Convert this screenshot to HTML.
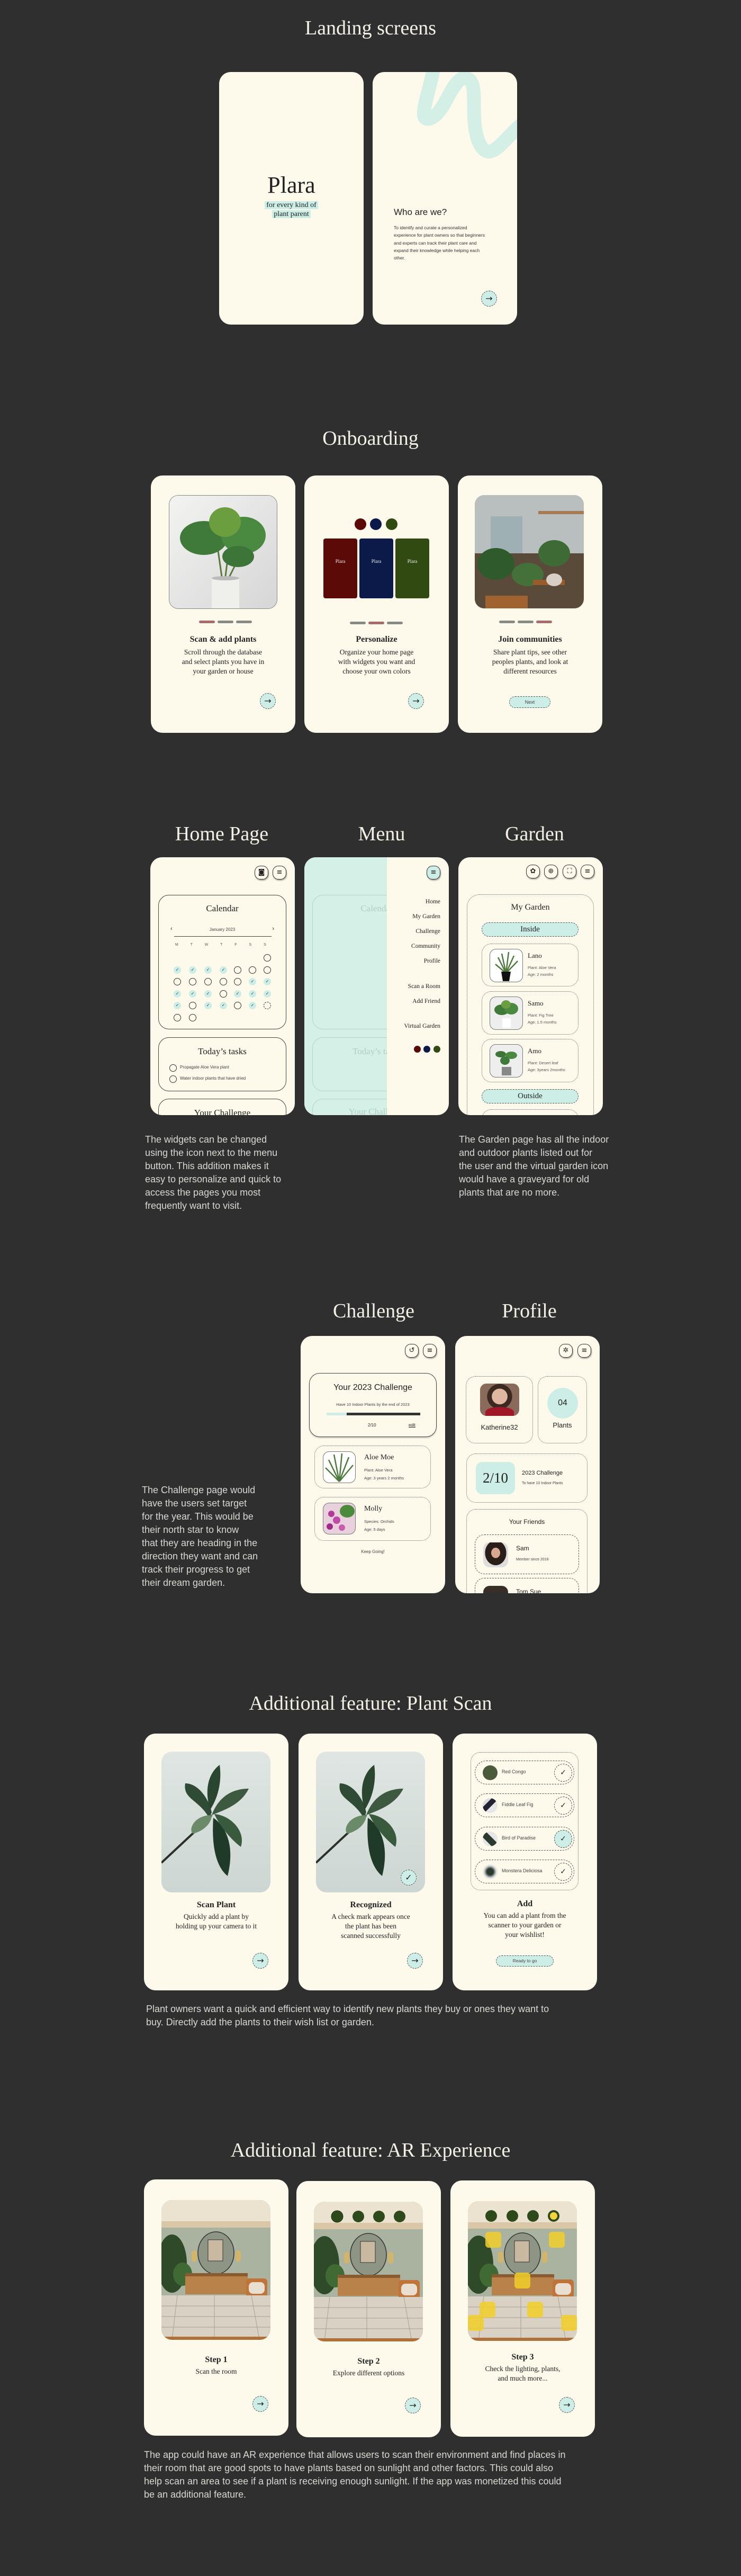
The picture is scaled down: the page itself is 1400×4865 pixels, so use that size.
<!DOCTYPE html>
<html><head><meta charset="utf-8">
<style>
*{box-sizing:border-box;margin:0;padding:0}
body{width:1400px;height:4865px;background:#2f2f2f;position:relative;overflow:hidden;font-family:"Liberation Serif",serif;color:#222}
.a{position:absolute}
.h{position:absolute;left:0;width:1400px;text-align:center;color:#f3f0e6;font-family:"Liberation Serif",serif;font-size:38px;line-height:44px}
.ht{position:absolute;text-align:center;color:#f3f0e6;font-size:38px;line-height:44px;width:300px}
.p{position:absolute;background:#fdf9eb;border-radius:22px;overflow:hidden;width:273px}
.desc{position:absolute;color:#d8d8d2;font-family:"Liberation Sans",sans-serif;font-size:18px;line-height:25px}
.arr{position:absolute;width:30px;height:30px;border-radius:50%;background:#cdeee6;border:1px dashed #555;text-align:center;font:16px/27px "DejaVu Sans",sans-serif;color:#222}
.c{position:absolute;left:0;width:100%;text-align:center}
.ti{font-size:16px;font-weight:bold;line-height:20px}
.ds{font-size:13.5px;line-height:18px}
.ib{position:absolute;width:26px;height:26px;border:1.2px solid #333;border-radius:11px;background:#fdf9eb;box-shadow:1px 2px 2px rgba(0,0,0,.35);text-align:center;font:13px/23px "DejaVu Sans",sans-serif}
.card{position:absolute;border:1px solid #444;border-radius:20px}
.dc{position:absolute;border:1px dotted #666;border-radius:18px}
.dash{position:absolute;border:1px dashed #555;border-radius:16px}
.cir{position:absolute;width:14px;height:14px;border-radius:50%;border:1px solid #333}
.ck{position:absolute;width:14px;height:14px;border-radius:50%;background:#cdeee6;font:8px/14px "DejaVu Sans",sans-serif;text-align:center;color:#234}
.sm{font-family:"Liberation Sans",sans-serif}
</style></head><body>

<!-- LANDING -->
<div class="h" style="top:31px">Landing screens</div>
<div class="p" style="left:414px;top:136px;height:477px">
  <div class="c" style="top:188px;font-size:44px;line-height:52px">Plara</div>
  <div class="c" style="top:243px;font-size:14px;line-height:17px"><span style="background:#cdeee6;padding:0 3px">for every kind of</span><br><span style="background:#cdeee6;padding:0 3px">plant parent</span></div>
</div>
<div class="p" style="left:704px;top:136px;height:477px">
  <svg class="a" style="left:0;top:0" width="273" height="200"><path d="M118,-20 C108,40 82,95 108,88 C138,80 150,5 178,12 C205,20 178,100 206,142 C228,170 250,120 295,88" fill="none" stroke="#d3efe6" stroke-width="26" stroke-linecap="round"/></svg>
  <div class="a sm" style="left:40px;top:254px;font-size:17px;line-height:22px">Who are we?</div>
  <div class="a sm" style="left:40px;top:287px;width:175px;font-size:8.5px;line-height:14.3px;color:#333">To identify and curate a personalized experience for plant owners so that beginners and experts can track their plant care and expand their knowledge while helping each other.</div>
  <div class="arr" style="left:205px;top:413px">→</div>
</div>

<!-- ONBOARDING -->
<div class="h" style="top:806px">Onboarding</div>
<div class="p" style="left:285px;top:898px;height:486px">
  <svg class="a" style="left:34px;top:37px;border-radius:18px;border:1px solid #888" width="205" height="215">
    <defs><linearGradient id="g1" x1="0" y1="0" x2="1" y2="1"><stop offset="0" stop-color="#f3f3f2"/><stop offset="1" stop-color="#d6d6d6"/></linearGradient></defs>
    <rect width="205" height="215" fill="url(#g1)"/>
    <path d="M100,160 L90,90 M105,160 L115,80 M110,160 L140,100" stroke="#5a7a3a" stroke-width="3"/>
    <ellipse cx="65" cy="80" rx="45" ry="32" fill="#3f7a3a"/><ellipse cx="140" cy="75" rx="42" ry="35" fill="#4a8a40"/><ellipse cx="105" cy="50" rx="30" ry="28" fill="#6a9e3e"/><ellipse cx="130" cy="115" rx="30" ry="20" fill="#3d7538"/>
    <rect x="80" y="155" width="52" height="60" fill="#efefec"/><ellipse cx="106" cy="156" rx="26" ry="4" fill="#bbb"/>
  </svg>
  <div class="a" style="left:91px;top:274px;width:30px;height:5px;border-radius:3px;background:#a86a6a"></div>
  <div class="a" style="left:126px;top:274px;width:30px;height:5px;border-radius:3px;background:#8a8a84"></div>
  <div class="a" style="left:161px;top:274px;width:30px;height:5px;border-radius:3px;background:#8a8a84"></div>
  <div class="c ti" style="top:300px">Scan &amp; add plants</div>
  <div class="c ds" style="top:325px">Scroll through the database<br>and select plants you have in<br>your garden or house</div>
  <div class="arr" style="left:206px;top:411px">→</div>
</div>
<div class="p" style="left:575px;top:898px;height:486px">
  <div class="a" style="left:95px;top:81px;width:22px;height:22px;border-radius:50%;background:#5c0a08"></div>
  <div class="a" style="left:124px;top:81px;width:22px;height:22px;border-radius:50%;background:#0c1a4a"></div>
  <div class="a" style="left:154px;top:81px;width:22px;height:22px;border-radius:50%;background:#314a12"></div>
  <div class="a" style="left:36px;top:119px;width:64px;height:113px;border-radius:4px;background:#5c0a08;color:#eee;text-align:center;font-size:9px;padding-top:38px">Plara</div>
  <div class="a" style="left:104px;top:119px;width:64px;height:113px;border-radius:4px;background:#0c1a4a;color:#eee;text-align:center;font-size:9px;padding-top:38px">Plara</div>
  <div class="a" style="left:172px;top:119px;width:64px;height:113px;border-radius:4px;background:#314a12;color:#eee;text-align:center;font-size:9px;padding-top:38px">Plara</div>
  <div class="a" style="left:86px;top:276px;width:30px;height:5px;border-radius:3px;background:#8a8a84"></div>
  <div class="a" style="left:121px;top:276px;width:30px;height:5px;border-radius:3px;background:#a86a6a"></div>
  <div class="a" style="left:156px;top:276px;width:30px;height:5px;border-radius:3px;background:#8a8a84"></div>
  <div class="c ti" style="top:300px">Personalize</div>
  <div class="c ds" style="top:325px">Organize your home page<br>with widgets you want and<br>choose your own colors</div>
  <div class="arr" style="left:196px;top:411px">→</div>
</div>
<div class="p" style="left:865px;top:898px;height:486px">
  <svg class="a" style="left:32px;top:37px;border-radius:18px" width="206" height="214">
    <rect width="206" height="214" fill="#8a8c84"/>
    <rect x="0" y="0" width="206" height="110" fill="#b9bfbf"/><rect x="30" y="40" width="60" height="70" fill="#9fb0b5"/><rect x="120" y="30" width="86" height="6" fill="#a87a50"/>
    <rect x="0" y="110" width="206" height="104" fill="#5a4a3a"/>
    <ellipse cx="40" cy="130" rx="35" ry="30" fill="#2f5a2c"/><ellipse cx="150" cy="110" rx="30" ry="25" fill="#3d6a35"/><ellipse cx="100" cy="150" rx="30" ry="22" fill="#44703a"/>
    <rect x="110" y="160" width="60" height="10" fill="#9a5a2a"/><rect x="20" y="190" width="80" height="24" fill="#a0622e"/><ellipse cx="150" cy="160" rx="15" ry="12" fill="#d8d0c6"/>
  </svg>
  <div class="a" style="left:78px;top:274px;width:30px;height:5px;border-radius:3px;background:#8a8a84"></div>
  <div class="a" style="left:113px;top:274px;width:30px;height:5px;border-radius:3px;background:#8a8a84"></div>
  <div class="a" style="left:148px;top:274px;width:30px;height:5px;border-radius:3px;background:#a86a6a"></div>
  <div class="c ti" style="top:300px">Join communities</div>
  <div class="c ds" style="top:325px">Share plant tips, see other<br>peoples plants, and look at<br>different resources</div>
  <div class="a sm" style="left:97px;top:417px;width:78px;height:22px;border-radius:11px;background:#cdeee6;border:1px dashed #555;text-align:center;font-size:9px;line-height:20px;color:#444">Next</div>
</div>

<!-- HOME / MENU / GARDEN -->
<div class="ht" style="left:269px;top:1553px">Home Page</div>
<div class="ht" style="left:571px;top:1553px">Menu</div>
<div class="ht" style="left:860px;top:1553px">Garden</div>

<div class="p" style="left:284px;top:1619px;height:487px">
  <div class="ib" style="left:197px;top:16px">◙</div>
  <div class="ib" style="left:231px;top:16px">≡</div>
  <div class="card" style="left:15px;top:71px;width:242px;height:254px">
    <div class="c" style="top:15px;font-size:17px">Calendar</div>
    <div class="a sm" style="left:22px;top:57px;font-size:11px">‹</div>
    <div class="c sm" style="top:60px;font-size:8px;color:#444">January 2023</div>
    <div class="a sm" style="right:22px;top:57px;font-size:11px">›</div>
    <div class="a" style="left:29px;top:77px;width:184px;height:1px;background:#444"></div>
  </div>
  <div class="a sm" style="left:47px;top:162px;width:190px;font-size:7px;color:#555;word-spacing:21px">M T W T F S S</div>
  <!-- row0 -->
  <div class="cir" style="left:214px;top:183px"></div>
  <!-- row1 -->
  <div class="ck" style="left:44px;top:206px">✓</div><div class="ck" style="left:73px;top:206px">✓</div><div class="ck" style="left:102px;top:206px">✓</div><div class="ck" style="left:131px;top:206px">✓</div><div class="cir" style="left:158px;top:206px"></div><div class="cir" style="left:186px;top:206px"></div><div class="cir" style="left:214px;top:206px"></div>
  <!-- row2 -->
  <div class="cir" style="left:44px;top:228px"></div><div class="cir" style="left:73px;top:228px"></div><div class="cir" style="left:102px;top:228px"></div><div class="cir" style="left:131px;top:228px"></div><div class="cir" style="left:158px;top:228px"></div><div class="ck" style="left:186px;top:228px">✓</div><div class="ck" style="left:214px;top:228px">✓</div>
  <!-- row3 -->
  <div class="ck" style="left:44px;top:251px">✓</div><div class="ck" style="left:73px;top:251px">✓</div><div class="ck" style="left:102px;top:251px">✓</div><div class="cir" style="left:131px;top:251px"></div><div class="ck" style="left:158px;top:251px">✓</div><div class="ck" style="left:186px;top:251px">✓</div><div class="ck" style="left:214px;top:251px">✓</div>
  <!-- row4 -->
  <div class="ck" style="left:44px;top:273px">✓</div><div class="cir" style="left:73px;top:273px"></div><div class="ck" style="left:102px;top:273px">✓</div><div class="ck" style="left:131px;top:273px">✓</div><div class="cir" style="left:158px;top:273px"></div><div class="ck" style="left:186px;top:273px">✓</div><div class="cir" style="left:214px;top:273px;border-style:dashed"></div>
  <!-- row5 -->
  <div class="cir" style="left:44px;top:296px"></div><div class="cir" style="left:73px;top:296px"></div>
  <div class="card" style="left:15px;top:340px;width:242px;height:102px">
    <div class="c" style="top:16px;font-size:17px">Today’s tasks</div>
    <div class="cir" style="left:20px;top:50px"></div><div class="a sm" style="left:40px;top:51px;font-size:8px;color:#444">Propagate Aloe Vera plant</div>
    <div class="cir" style="left:20px;top:71px"></div><div class="a sm" style="left:40px;top:72px;font-size:8px;color:#444">Water indoor plants that have dried</div>
  </div>
  <div class="card" style="left:15px;top:456px;width:242px;height:102px">
    <div class="c" style="top:16px;font-size:17px">Your Challenge</div>
  </div>
</div>

<div class="p" style="left:575px;top:1619px;height:487px">
  <div class="a" style="left:0;top:0;width:156px;height:487px;background:#d5f1e7;overflow:hidden">
    <div style="opacity:.18">
    <div class="card" style="left:15px;top:71px;width:242px;height:254px"><div class="a" style="left:0;width:242px;text-align:center;top:15px;font-size:17px">Calendar</div></div>
    <div class="card" style="left:15px;top:340px;width:242px;height:102px"><div class="a" style="left:0;width:242px;text-align:center;top:16px;font-size:17px">Today’s tasks</div></div>
    <div class="card" style="left:15px;top:456px;width:242px;height:102px"><div class="a" style="left:0;width:242px;text-align:center;top:14px;font-size:17px">Your Challenge</div></div>
    </div>
  </div>
  <div class="ib" style="left:231px;top:16px;background:#cdeee6">≡</div>
  <div class="a" style="right:16px;top:70px;text-align:right;font-size:11.5px;line-height:28px">Home<br>My Garden<br>Challenge<br>Community<br>Profile</div>
  <div class="a" style="right:16px;top:230px;text-align:right;font-size:11.5px;line-height:28px">Scan a Room<br>Add Friend</div>
  <div class="a" style="right:16px;top:305px;text-align:right;font-size:11.5px;line-height:28px">Virtual Garden</div>
  <div class="a" style="left:207px;top:356px;width:13px;height:13px;border-radius:50%;background:#5c0a08"></div>
  <div class="a" style="left:225px;top:356px;width:13px;height:13px;border-radius:50%;background:#0c1a4a"></div>
  <div class="a" style="left:244px;top:356px;width:13px;height:13px;border-radius:50%;background:#314a12"></div>
</div>

<div class="p" style="left:866px;top:1619px;height:487px">
  <div class="ib" style="left:128px;top:14px">✿</div>
  <div class="ib" style="left:162px;top:14px">⊕</div>
  <div class="ib" style="left:197px;top:14px">⛶</div>
  <div class="ib" style="left:231px;top:14px">≡</div>
  <div class="dc" style="left:16px;top:70px;width:240px;height:440px;border-radius:24px">
    <div class="c" style="top:15px;font-size:16px">My Garden</div>
  </div>
  <div class="dash" style="left:44px;top:123px;width:183px;height:27px;background:#cdeee6;text-align:center;font-size:15px;line-height:25px">Inside</div>
  <div class="dc" style="left:44px;top:163px;width:183px;height:81px">
    <div class="a" style="left:14px;top:9px;width:63px;height:63px;border:1px solid #777;border-radius:12px;background:#fff"><svg width="61" height="61"><path d="M30,45 L15,15 M30,45 L22,8 M30,45 L35,5 M30,45 L45,12 M30,45 L52,22 M30,45 L10,28" stroke="#4c7a3c" stroke-width="2.5"/><path d="M21,42 L39,42 L36,60 L24,60Z" fill="#111"/></svg></div>
    <div class="a" style="left:86px;top:14px;font-size:13px">Lano</div>
    <div class="a sm" style="left:86px;top:38px;font-size:7.5px;line-height:13px;color:#555">Plant: Aloe Vera<br>Age: 2 months</div>
  </div>
  <div class="dc" style="left:44px;top:253px;width:183px;height:82px">
    <div class="a" style="left:14px;top:9px;width:63px;height:63px;border:1px solid #777;border-radius:12px;background:#eee"><svg width="61" height="61"><ellipse cx="22" cy="24" rx="14" ry="10" fill="#3f7a3a"/><ellipse cx="40" cy="22" rx="13" ry="11" fill="#4a8a40"/><ellipse cx="30" cy="14" rx="9" ry="8" fill="#6a9e3e"/><rect x="23" y="40" width="16" height="18" fill="#fff"/></svg></div>
    <div class="a" style="left:86px;top:14px;font-size:13px">Samo</div>
    <div class="a sm" style="left:86px;top:38px;font-size:7.5px;line-height:13px;color:#555">Plant: Fig Tree<br>Age: 1.5 months</div>
  </div>
  <div class="dc" style="left:44px;top:343px;width:183px;height:82px">
    <div class="a" style="left:14px;top:9px;width:63px;height:63px;border:1px solid #777;border-radius:12px;background:#eee"><svg width="61" height="61"><ellipse cx="20" cy="18" rx="10" ry="6" fill="#3d7538"/><ellipse cx="40" cy="20" rx="11" ry="7" fill="#4a8a40"/><ellipse cx="28" cy="30" rx="9" ry="8" fill="#3f7a3a"/><rect x="22" y="42" width="18" height="16" fill="#888"/></svg></div>
    <div class="a" style="left:86px;top:14px;font-size:13px">Amo</div>
    <div class="a sm" style="left:86px;top:38px;font-size:7.5px;line-height:13px;color:#555">Plant: Desert leaf<br>Age: 3years 2months</div>
  </div>
  <div class="dash" style="left:44px;top:438px;width:183px;height:27px;background:#cdeee6;text-align:center;font-size:15px;line-height:25px">Outside</div>
  <div class="dc" style="left:44px;top:476px;width:183px;height:80px"></div>
</div>

<div class="desc" style="left:274px;top:2140px">The widgets can be changed<br>using the icon next to the menu<br>button. This addition makes it<br>easy to personalize and quick to<br>access the pages you most<br>frequently want to visit.</div>
<div class="desc" style="left:867px;top:2140px">The Garden page has all the indoor<br>and outdoor plants listed out for<br>the user and the virtual garden icon<br>would have a graveyard for old<br>plants that are no more.</div>

<!-- CHALLENGE / PROFILE -->
<div class="ht" style="left:556px;top:2454px">Challenge</div>
<div class="ht" style="left:850px;top:2454px">Profile</div>
<div class="desc" style="left:268px;top:2802px">The Challenge page would<br>have the users set target<br>for the year. This would be<br>their north star to know<br>that they are heading in the<br>direction they want and can<br>track their progress to get<br>their dream garden.</div>

<div class="p" style="left:568px;top:2523px;height:486px">
  <div class="ib" style="left:197px;top:15px">↺</div>
  <div class="ib" style="left:231px;top:15px">≡</div>
  <div class="card" style="left:16px;top:70px;width:241px;height:121px;box-shadow:0 2px 2px rgba(0,0,0,.2)">
    <div class="c sm" style="top:18px;font-size:16px">Your 2023 Challenge</div>
    <div class="c sm" style="top:54px;font-size:7.5px;color:#444">Have 10 Indoor Plants by the end of 2023</div>
    <div class="a" style="left:32px;top:74px;width:177px;height:5px;background:#333"></div>
    <div class="a" style="left:32px;top:74px;width:38px;height:5px;background:#cdeee6"></div>
    <div class="a sm" style="left:110px;top:93px;font-size:8px">2/10</div>
    <div class="a sm" style="left:187px;top:93px;font-size:8px;text-decoration:underline">edit</div>
  </div>
  <div class="dc" style="left:26px;top:207px;width:220px;height:81px">
    <div class="a" style="left:15px;top:10px;width:62px;height:60px;border:1px solid #777;border-radius:12px;background:#fff"><svg width="60" height="58"><path d="M30,56 L10,15 M30,56 L20,5 M30,56 L35,3 M30,56 L48,10 M30,56 L56,25 M30,56 L4,30" stroke="#4c7a3c" stroke-width="2.5"/></svg></div>
    <div class="a" style="left:93px;top:14px;font-size:14px">Aloe Moe</div>
    <div class="a sm" style="left:93px;top:38px;font-size:7.5px;line-height:15px;color:#444">Plant: Aloe Vera<br>Age: 3 years 2 months</div>
  </div>
  <div class="dc" style="left:26px;top:304px;width:220px;height:83px">
    <div class="a" style="left:15px;top:10px;width:62px;height:60px;border:1px solid #777;border-radius:12px;background:#e8d0dc;overflow:hidden"><svg width="60" height="58"><ellipse cx="45" cy="15" rx="14" ry="12" fill="#4a8a3a"/><circle cx="15" cy="20" r="6" fill="#b43a9a"/><circle cx="25" cy="32" r="7" fill="#c04aa8"/><circle cx="12" cy="44" r="6" fill="#a02a8a"/><circle cx="35" cy="46" r="6" fill="#c85ab0"/></svg></div>
    <div class="a" style="left:93px;top:14px;font-size:14px">Molly</div>
    <div class="a sm" style="left:93px;top:38px;font-size:7.5px;line-height:15px;color:#444">Species: Orchids<br>Age: 5 days</div>
  </div>
  <div class="c sm" style="top:403px;font-size:8px;color:#444">Keep Going!</div>
</div>

<div class="p" style="left:860px;top:2523px;height:486px">
  <div class="ib" style="left:196px;top:15px">✲</div>
  <div class="ib" style="left:231px;top:15px">≡</div>
  <div class="dc" style="left:20px;top:76px;width:127px;height:127px">
    <div class="a" style="left:26px;top:13px;width:74px;height:61px;border-radius:12px;background:radial-gradient(circle at 50% 40%,#e0b8a0 0 28%,#3a2a22 29% 45%,#8a6a5a 46%);overflow:hidden"><div class="a" style="left:10px;top:44px;width:54px;height:20px;border-radius:50% 50% 0 0;background:#a01828"></div></div>
    <div class="c sm" style="top:88px;font-size:13px">Katherine32</div>
  </div>
  <div class="dc" style="left:156px;top:76px;width:93px;height:127px">
    <div class="a" style="left:17px;top:21px;width:58px;height:58px;border-radius:50%;background:#cdeee6;text-align:center;font:16px/58px 'Liberation Sans',sans-serif">04</div>
    <div class="c sm" style="top:84px;font-size:13px">Plants</div>
  </div>
  <div class="dc" style="left:21px;top:222px;width:229px;height:93px">
    <div class="a" style="left:17px;top:15px;width:74px;height:61px;border-radius:12px;background:#cdeee6;text-align:center;font-size:27px;line-height:61px">2/10</div>
    <div class="a sm" style="left:104px;top:30px;font-size:11px">2023 Challenge</div>
    <div class="a sm" style="left:104px;top:52px;font-size:7px;color:#444">To have 10 Indoor Plants</div>
  </div>
  <div class="dc" style="left:21px;top:327px;width:229px;height:200px">
    <div class="c sm" style="top:16px;font-size:12px">Your Friends</div>
  </div>
  <div class="dash" style="left:37px;top:375px;width:197px;height:75px;border-radius:18px">
    <div class="a" style="left:15px;top:14px;width:47px;height:47px;border-radius:12px;background:radial-gradient(ellipse at 50% 42%,#d8a890 0 25%,#2a1e18 26% 60%,#ddd 61%)"></div>
    <div class="a sm" style="left:77px;top:18px;font-size:12px">Sam</div>
    <div class="a sm" style="left:77px;top:43px;font-size:7px;color:#444">Member since 2018</div>
  </div>
  <div class="dash" style="left:37px;top:457px;width:197px;height:75px;border-radius:18px">
    <div class="a" style="left:15px;top:14px;width:47px;height:47px;border-radius:12px;background:#3a2e28"></div>
    <div class="a sm" style="left:77px;top:18px;font-size:12px">Tom Sue</div>
  </div>
</div>

<!-- PLANT SCAN -->
<div class="h" style="top:3195px">Additional feature: Plant Scan</div>
<div class="p" style="left:272px;top:3274px;height:485px">
  <svg class="a" style="left:33px;top:34px;border-radius:20px" width="206" height="266">
    <defs><linearGradient id="gs" x1="0" y1="0" x2="0" y2="1"><stop offset="0" stop-color="#dfe6e3"/><stop offset="1" stop-color="#cdd6d2"/></linearGradient></defs>
    <rect width="206" height="266" fill="url(#gs)"/>
    <path d="M0,210 L75,140 L95,120" stroke="#2c2f2a" stroke-width="4" fill="none"/>
    <path d="M90,125 C70,90 40,90 45,60 C70,60 90,90 95,115Z" fill="#2f4a35"/>
    <path d="M95,120 C110,80 140,70 165,70 C150,100 120,110 95,120Z" fill="#3d5a40"/>
    <path d="M95,120 C60,120 50,150 60,155 C80,150 95,135 95,120Z" fill="#6a8a68"/>
    <path d="M98,125 C120,140 140,175 125,235 C100,215 95,170 98,125Z" fill="#1f3a28"/>
    <path d="M100,118 C130,120 160,150 150,180 C130,165 110,140 100,118Z" fill="#3a5a3e"/>
    <path d="M92,110 C80,70 90,40 110,25 C115,60 105,90 92,110Z" fill="#2a4530"/>
  </svg>
  <div class="c ti" style="top:314px">Scan Plant</div>
  <div class="c ds" style="top:337px">Quickly add a plant by<br>holding up your camera to it</div>
  <div class="arr" style="left:205px;top:414px">→</div>
</div>
<div class="p" style="left:564px;top:3274px;height:485px">
  <svg class="a" style="left:33px;top:34px;border-radius:20px" width="206" height="266">
    <rect width="206" height="266" fill="url(#gs)"/>
    <path d="M0,210 L75,140 L95,120" stroke="#2c2f2a" stroke-width="4" fill="none"/>
    <path d="M90,125 C70,90 40,90 45,60 C70,60 90,90 95,115Z" fill="#2f4a35"/>
    <path d="M95,120 C110,80 140,70 165,70 C150,100 120,110 95,120Z" fill="#3d5a40"/>
    <path d="M95,120 C60,120 50,150 60,155 C80,150 95,135 95,120Z" fill="#6a8a68"/>
    <path d="M98,125 C120,140 140,175 125,235 C100,215 95,170 98,125Z" fill="#1f3a28"/>
    <path d="M100,118 C130,120 160,150 150,180 C130,165 110,140 100,118Z" fill="#3a5a3e"/>
    <path d="M92,110 C80,70 90,40 110,25 C115,60 105,90 92,110Z" fill="#2a4530"/>
  </svg>
  <div class="arr" style="left:193px;top:257px">✓</div>
  <div class="c ti" style="top:314px">Recognized</div>
  <div class="c ds" style="top:337px">A check mark appears once<br>the plant has been<br>scanned successfully</div>
  <div class="arr" style="left:205px;top:414px">→</div>
</div>
<div class="p" style="left:855px;top:3274px;height:485px">
  <div class="dc" style="left:34px;top:35px;width:204px;height:261px"></div>
  <div class="dash" style="left:42px;top:51px;width:188px;height:45px;border-radius:22px"><div class="a" style="left:14px;top:8px;width:28px;height:28px;border-radius:50%;background:#4a5a3a"></div><div class="a sm" style="left:50px;top:15px;font-size:9px;color:#444">Red Congo</div><div class="a" style="left:149px;top:5px;width:34px;height:34px;border-radius:50%;border:1px dashed #444;text-align:center;font:14px/32px 'DejaVu Sans'">✓</div></div>
  <div class="dash" style="left:42px;top:113px;width:188px;height:45px;border-radius:22px"><div class="a" style="left:14px;top:8px;width:28px;height:28px;border-radius:50%;background:linear-gradient(135deg,#ddd 30%,#223 31% 55%,#e6e6e6 56%)"></div><div class="a sm" style="left:50px;top:15px;font-size:9px;color:#444">Fiddle Leaf Fig</div><div class="a" style="left:149px;top:5px;width:34px;height:34px;border-radius:50%;border:1px dashed #444;text-align:center;font:14px/32px 'DejaVu Sans'">✓</div></div>
  <div class="dash" style="left:42px;top:176px;width:188px;height:45px;border-radius:22px"><div class="a" style="left:14px;top:8px;width:28px;height:28px;border-radius:50%;background:linear-gradient(45deg,#e6e6e6 30%,#2a3a2e 31% 60%,#e6e6e6 61%)"></div><div class="a sm" style="left:50px;top:15px;font-size:9px;color:#444">Bird of Paradise</div><div class="a" style="left:149px;top:5px;width:34px;height:34px;border-radius:50%;border:1px dashed #444;background:#cdeee6;text-align:center;font:14px/32px 'DejaVu Sans'">✓</div></div>
  <div class="dash" style="left:42px;top:238px;width:188px;height:45px;border-radius:22px"><div class="a" style="left:14px;top:8px;width:28px;height:28px;border-radius:50%;background:radial-gradient(circle,#2a3a2e 30%,#e6e6e6 60%)"></div><div class="a sm" style="left:50px;top:15px;font-size:9px;color:#444">Monstera Deliciosa</div><div class="a" style="left:149px;top:5px;width:34px;height:34px;border-radius:50%;border:1px dashed #444;text-align:center;font:14px/32px 'DejaVu Sans'">✓</div></div>
  <div class="c ti" style="top:312px">Add</div>
  <div class="c ds" style="top:335px">You can add a plant from the<br>scanner to your garden or<br>your wishlist!</div>
  <div class="a sm" style="left:82px;top:419px;width:109px;height:21px;border-radius:11px;background:#cdeee6;border:1px dashed #555;text-align:center;font-size:8.5px;line-height:19px;color:#444">Ready to go</div>
</div>
<div class="desc" style="left:276px;top:3782px">Plant owners want a quick and efficient way to identify new plants they buy or ones they want to<br>buy. Directly add the plants to their wish list or garden.</div>

<!-- AR -->
<div class="h" style="top:4039px">Additional feature: AR Experience</div>
<svg width="0" height="0" style="position:absolute"><defs>
<g id="room">
  <rect width="206" height="264" fill="#a9b3a0"/>
  <rect width="206" height="45" fill="#ece2d0"/><rect y="40" width="206" height="12" fill="#d9c7a8"/>
  <ellipse cx="103" cy="100" rx="34" ry="40" fill="#8e9584" stroke="#333" stroke-width="1.5"/>
  <rect x="88" y="75" width="28" height="40" fill="#c8b9a0" stroke="#333"/>
  <rect x="57" y="95" width="10" height="22" rx="5" fill="#d4b46a"/><rect x="140" y="95" width="10" height="22" rx="5" fill="#d4b46a"/>
  <ellipse cx="20" cy="120" rx="28" ry="55" fill="#2f4a28"/><ellipse cx="40" cy="140" rx="18" ry="22" fill="#3f6a34"/>
  <rect x="45" y="138" width="118" height="40" fill="#b8824a"/><rect x="45" y="138" width="118" height="6" fill="#8a5a30"/>
  <rect x="160" y="148" width="40" height="40" rx="6" fill="#c0743a"/><rect x="165" y="155" width="30" height="22" rx="8" fill="#e8dfd0"/>
  <rect y="180" width="206" height="84" fill="#d9d2c4"/>
  <path d="M0,200 L206,200 M0,220 L206,220 M0,240 L206,240 M30,180 L20,264 M100,180 L100,264 M170,180 L185,264" stroke="#a8a090" stroke-width="1"/>
  <rect y="258" width="206" height="6" fill="#b0703a"/>
</g></defs></svg>
<div class="p" style="left:272px;top:4116px;height:484px">
  <svg class="a" style="left:33px;top:39px;border-radius:20px" width="206" height="264"><use href="#room"/></svg>
  <div class="c ti" style="top:331px">Step 1</div>
  <div class="c ds" style="top:354px">Scan the room</div>
  <div class="arr" style="left:205px;top:409px">→</div>
</div>
<div class="p" style="left:560px;top:4119px;height:484px">
  <svg class="a" style="left:33px;top:39px;border-radius:20px" width="206" height="264"><use href="#room"/>
    <circle cx="44" cy="28" r="11" fill="#2f4a1a" stroke="#1e3010"/><circle cx="84" cy="28" r="11" fill="#2f4a1a"/><circle cx="123" cy="28" r="11" fill="#2f4a1a"/><circle cx="162" cy="28" r="11" fill="#2f4a1a"/></svg>
  <div class="c ti" style="top:331px">Step 2</div>
  <div class="c ds" style="top:354px">Explore different options</div>
  <div class="arr" style="left:205px;top:409px">→</div>
</div>
<div class="p" style="left:851px;top:4118px;height:484px">
  <svg class="a" style="left:33px;top:39px;border-radius:20px" width="206" height="264"><use href="#room"/>
    <circle cx="44" cy="28" r="11" fill="#2f4a1a"/><circle cx="84" cy="28" r="11" fill="#2f4a1a"/><circle cx="123" cy="28" r="11" fill="#2f4a1a"/><circle cx="162" cy="28" r="11" fill="#2f4a1a"/><circle cx="162" cy="28" r="7" fill="#f2d33a"/>
    <g fill="#f2cf2a" opacity=".85"><rect x="33" y="58" width="30" height="30" rx="6"/><rect x="153" y="58" width="30" height="30" rx="6"/><rect x="88" y="135" width="30" height="30" rx="6"/><rect x="22" y="190" width="30" height="30" rx="6"/><rect x="112" y="190" width="30" height="30" rx="6"/><rect x="0" y="215" width="30" height="30" rx="6"/><rect x="176" y="215" width="30" height="30" rx="6"/></g></svg>
  <div class="c ti" style="top:324px">Step 3</div>
  <div class="c ds" style="top:347px">Check the lighting, plants,<br>and much more...</div>
  <div class="arr" style="left:205px;top:409px">→</div>
</div>
<div class="desc" style="left:272px;top:4624px">The app could have an AR experience that allows users to scan their environment and find places in<br>their room that are good spots to have plants based on sunlight and other factors. This could also<br>help scan an area to see if a plant is receiving enough sunlight. If the app was monetized this could<br>be an additional feature.</div>

</body></html>
